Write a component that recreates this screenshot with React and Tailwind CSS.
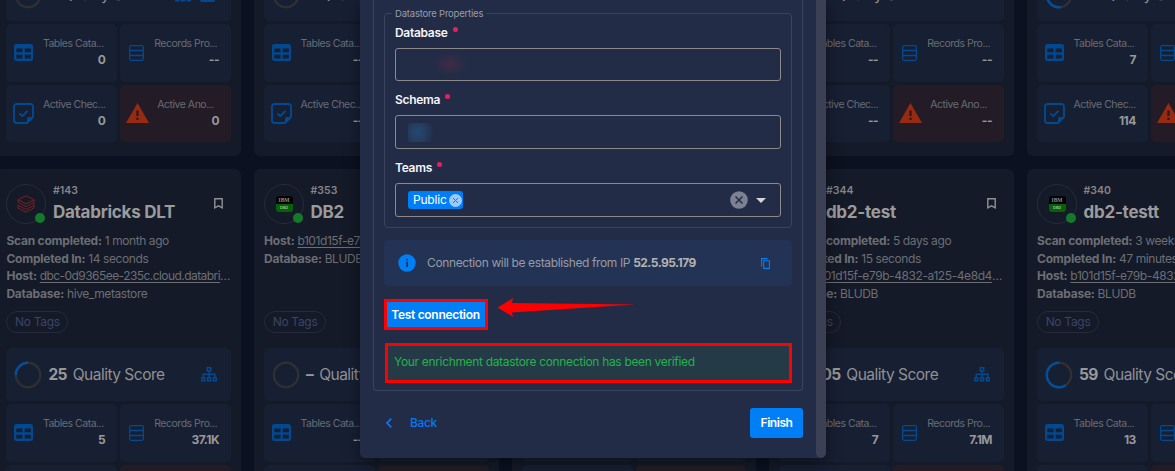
import React from "react";

const topRow = [
  { score: "–", pct: 0, icons: true, tables: "0", records: "--", checks: "0", anomalies: "0" },
  { score: "–", pct: 0, tables: "--", records: "--", checks: "--", anomalies: "--" },
  { score: "–", pct: 0, tables: "--", records: "--", checks: "--", anomalies: "--" },
  { score: "–", pct: 0, tables: "--", records: "--", checks: "--", anomalies: "--" },
  { score: "50", pct: 52, tables: "7", records: "--", checks: "114", anomalies: "--" },
];

const bottomRow = [
  {
    id: "#143", name: "Databricks DLT", logo: "databricks", op: "Scan",
    scan: "1 month ago", took: "14 seconds", host: "dbc-0d9365ee-235c.cloud.databricks.com", db: "hive_metastore",
    score: "25", pct: 25, tree: true, tables: "5", records: "37.1K",
  },
  {
    id: "#353", name: "DB2", logo: "db2",
    host: "b101d15f-e79b-4832-a125-4e8d4d.cloud", db: "BLUDB",
    score: "–", pct: 0, tables: "--", records: "--",
  },
  {
    id: "", name: "", logo: "db2",
    host: "", db: "",
    score: "–", pct: 0, tables: "--", records: "--",
  },
  {
    id: "#344", name: "db2-test", logo: "db2", op: "Catalog",
    scan: "5 days ago", took: "15 seconds", host: "b101d15f-e79b-4832-a125-4e8d4d.cloud", db: "BLUDB",
    score: "05", pct: 5, tree: true, tables: "7", records: "7.1M",
  },
  {
    id: "#340", name: "db2-testt", logo: "db2", op: "Scan",
    scan: "3 weeks ago", took: "47 minutes", host: "b101d15f-e79b-4832-a125-4e8d4d.cloud", db: "BLUDB",
    score: "59", pct: 59, tree: true, tables: "13", records: "7.1M",
  },
];

function Ring({ pct }) {
  const c = 2 * Math.PI * 12.2;
  return (
    <svg className="h-7 w-7 shrink-0" viewBox="0 0 28 28" fill="none" strokeWidth="2.4">
      <circle cx="14" cy="14" r="12.2" stroke="#303032" />
      {pct > 0 && (
        <circle
          cx="14" cy="14" r="12.2" stroke="#044f9a"
          strokeDasharray={`${(c * pct) / 100} ${c}`}
          transform="translate(28 0) scale(-1 1) rotate(-90 14 14)"
        />
      )}
    </svg>
  );
}

function TableIcon() {
  return (
    <svg className="h-[17px] w-[19px]" viewBox="0 0 19 17">
      <rect width="19" height="17" rx="2.5" fill="#03498f" />
      <path d="M2.300 4.500h6.200v3.700H2.300zM10.700 4.500h6.200v3.700h-6.200zM2.300 10.800h6.200v3.700H2.300zM10.700 10.800h6.200v3.700h-6.200z" fill="#171f33" />
    </svg>
  );
}

function RowsIcon() {
  return (
    <svg className="-ml-[2px] h-4 w-[15px]" viewBox="0 0 15 16" fill="none" stroke="#03498f" strokeWidth="1.3">
      <rect x=".65" y=".65" width="13.7" height="14.700" rx="1.500" />
      <path d="M.6 5.500h13.800M.6 10.500h13.800" />
    </svg>
  );
}

function CheckNoteIcon() {
  return (
    <svg className="h-[21px] w-[21px]" viewBox="0 0 21 21" fill="none" stroke="#03498f" strokeWidth="1.900">
      <path d="M14 20H3.500A2.500 2.500 0 0 1 1 17.500V3.500A2.500 2.500 0 0 1 3.500 1h14A2.500 2.500 0 0 1 20 3.500V14Z" strokeLinejoin="round" />
      <path d="M14 20v-4.500a1.500 1.500 0 0 1 1.500-1.500H20Z" fill="#03498f" stroke="none" />
      <path d="m6.300 10.300 2.900 2.900 5.300-5.300" />
    </svg>
  );
}

function WarningIcon() {
  return (
    <svg className="h-5 w-[23px]" viewBox="0 0 23 20">
      <path d="M11.500 0 23 20H0Z" fill="#982a11" />
      <path d="M10.400 7.500h2.200v5.500h-2.200zM10.400 14.700h2.200v2.200h-2.200z" fill="#231c26" />
    </svg>
  );
}

function TreeIcon() {
  return (
    <svg className="h-[15px] w-4" viewBox="0 0 16 15" fill="none" stroke="#03498f" strokeWidth="1.500">
      <path d="M6.300.8h3.400v3.300H6.300zM.8 10.800h2.900v3H.8zM6.500 10.800h3v3h-3zM12.300 10.800h2.900v3h-2.900zM8 4v7M2.200 11V7.300h11.600V11" />
    </svg>
  );
}

function Logo({ kind }) {
  if (kind === "databricks") {
    return (
      <svg className="h-[18px] w-[18px]" viewBox="0 0 18 18" fill="none" stroke="#7d211d" strokeWidth="1">
        <path d="M1 4.700 9 .8l8 3.900-8 4.200-8-4.200v2.700l8 4.200 8-4.200v2.900l-8 4.200-8-4.200v2.700l8 4.200 8-4.200v-2.700M17 4.700v2.700" />
      </svg>
    );
  }
  return (
    <div className="flex h-4 w-[17px] flex-col overflow-hidden rounded-[3px] text-center font-['Liberation_Serif',serif] text-[5.500px] font-bold leading-[9px] text-[#8b8b8b]">
      <span className="h-2 bg-black">IBM</span>
      <span className="h-2 bg-[#056306] font-['Liberation_Sans',sans-serif] text-[4px] leading-[7px] text-[#a5b5a5]">DB2</span>
    </div>
  );
}

function Stat({ icon, label, value, danger, wide }) {
  return (
    <div
      className={`flex h-[57.500px] items-center rounded-[5px] pr-3 ${danger ? "bg-[#231c26]" : "bg-[#171f33]"}`}
    >
      <div className="flex w-[35px] shrink-0 justify-center">{icon}</div>
      <div className={`min-w-0 flex-1 ${wide ? "pl-[1.500px]" : danger ? "pl-[2px]" : "-ml-px"}`}>
        <div className="whitespace-nowrap text-[10.500px] leading-4 tracking-[-0.480px] text-[#696c73]">{label}</div>
        <div className="-mt-px text-right text-[12px] font-bold leading-[18px] tracking-[-0.5px] text-[#989899]">{value}</div>
      </div>
    </div>
  );
}

function Stats({ d }) {
  return (
    <div className="flex flex-col gap-[3px]">
      <div className="flex h-[53px] items-center rounded-[5px] bg-[#171f33] pl-2 pr-[14px]">
        <Ring pct={d.pct} />
        <span className="ml-[6px] text-[15.500px] font-bold tracking-[-0.7px] text-[#989899]">{d.score}</span>
        <span className="ml-[6px] flex-1 whitespace-nowrap text-[15.500px] tracking-[-0.5px] text-[#909193]">Quality Score</span>
        {(d.tree || d.icons) && <TreeIcon />}
        {d.icons && (
          <svg className="ml-[9px] mr-[2px] h-[14px] w-[15px]" viewBox="0 0 15 14">
            <rect width="15" height="14" rx="2" fill="#03498f" />
          </svg>
        )}
      </div>
      <div className="grid grid-cols-2 gap-[3px]">
        <Stat icon={<TableIcon />} label="Tables Cata..." value={d.tables} wide />
        <Stat icon={<RowsIcon />} label="Records Pro..." value={d.records} />
        <Stat icon={<CheckNoteIcon />} label="Active Chec..." value={d.checks} wide />
        <Stat icon={<WarningIcon />} label="Active Ano..." value={d.anomalies} danger />
      </div>
    </div>
  );
}

function Meta({ label, children }) {
  return (
    <div className="truncate">
      <b className="font-bold tracking-[-0.220px]">{label}:</b> {children}
    </div>
  );
}

function Card({ d }) {
  return (
    <article className="h-[367px] min-w-0 rounded-[6px] bg-[#141a28] px-[10px] pt-[15px]">
      <header className="flex h-10">
        <div className="relative flex h-10 w-10 shrink-0 items-center justify-center rounded-full border border-[#252c3c]">
          <Logo kind={d.logo} />
          <i className="absolute right-0 bottom-0 h-[10px] w-[10px] rounded-full bg-[#147a2b]" />
        </div>
        <div className="ml-[6.500px] flex-1 whitespace-nowrap">
          <div className="h-[13px] text-[10.500px] font-semibold leading-[13px] tracking-[0.050px] text-[#85868a]">{d.id}</div>
          <div className="text-[17px] font-bold leading-[30px] tracking-[-0.250px] text-[#9b9b9c]">{d.name}</div>
        </div>
        <svg className="mr-2 mt-[14px] h-[11px] w-[9px]" viewBox="0 0 9 11" fill="none" stroke="#909195" strokeWidth="1.400">
          <path d="M.8.8h7.400v9L4.500 7.900.8 9.800Z" />
        </svg>
      </header>
      <div className="mt-2 h-[71px] text-[12px] leading-[17.700px] tracking-[-0.420px] text-[#6c6e74]">
        {d.scan && <Meta label={`${d.op} completed`}>{d.scan}</Meta>}
        {d.took && <Meta label="Completed In">{d.took}</Meta>}
        {d.host && (
          <Meta label="Host">
            <u className={d.logo === "databricks" ? "tracking-[-0.560px] underline-offset-2" : "underline-offset-2"}>{d.host}</u>
          </Meta>
        )}
        {d.db && <Meta label="Database">{d.db}</Meta>}
      </div>
      <div className="mb-[15px] mt-2 flex h-[22px] w-[62px] items-center justify-center whitespace-nowrap rounded-full border border-[#252b3c] text-[12px] tracking-[-0.3px] text-[#3b4564]">
        No Tags
      </div>
      <Stats d={d} />
    </article>
  );
}

function Label({ children }) {
  return (
    <div className="flex items-start text-[12px] font-semibold leading-4 tracking-[-0.3px] text-[#f4f5f8]">
      {children}
      <i className="ml-[5px] mt-[2px] h-[5px] w-[5px] rounded-full bg-[#ed1c60]" />
    </div>
  );
}

function Modal() {
  return (
    <section className="absolute left-[360px] top-0 flex h-[458px] w-[466px] overflow-hidden rounded-b-[5px] bg-[#232c47] shadow-[0_4px_16px_rgba(0,0,0,0.45)]">
      <div className="flex flex-1 flex-col pl-[13px] pr-[13px]">
        <div className="h-[391px] rounded-b-[4px] border-x border-b border-[#3b445f] px-[10px] pt-[13px]">
          <div className="relative h-[215px] rounded-[4px] border border-[#3b445f] px-[10px] pt-[11px]">
            <span className="absolute left-[7px] top-[-8px] whitespace-nowrap bg-[#232c47] px-[3px] text-[9.500px] leading-4 tracking-[-0.2px] text-[#9a9da7]">
              Datastore Properties
            </span>
            <Label>Database</Label>
            <div className="mt-[7px] h-[33px] rounded-[3px] border border-[#8b8989] pl-[38px] pt-[5px]">
              <div className="h-5 w-8 bg-[radial-gradient(16px_12px,#402b45,#232c47)]" />
            </div>
            <div className="mt-[11px]"><Label>Schema</Label></div>
            <div className="mt-[7px] h-[34px] rounded-[3px] border border-[#8b8989] pl-3 pt-[7px]">
              <div className="h-[19px] w-[26px] bg-[radial-gradient(16px_18px_at_38%_50%,#25486f_0%,#243f63_45%,#232c47_100%)]" />
            </div>
            <div className="mt-[11px]"><Label>Teams</Label></div>
            <div className="mt-[7px] flex h-[34px] items-center rounded-[3px] border border-[#8b8989] pl-3 pr-[14px]">
              <span className="flex h-[18px] w-[55px] items-center justify-between rounded-[3px] bg-[#007ef5] pl-[5px] pr-px text-[12px] tracking-[-0.2px] text-white">
                Public
                <svg className="h-[13px] w-[13px]" viewBox="0 0 13 13">
                  <circle cx="6.500" cy="6.500" r="6.500" fill="#9acbfb" />
                  <path d="m4 4 5 5M9 4 4 9" stroke="#1778dc" />
                </svg>
              </span>
              <svg className="ml-auto h-[18px] w-[18px]" viewBox="0 0 18 18">
                <circle cx="9" cy="9" r="8.800" fill="#7c8293" />
                <path d="m5.500 5.500 7 7m0-7-7 7" stroke="#232c47" strokeWidth="1.500" />
              </svg>
              <svg className="ml-2 h-[5px] w-[10px]" viewBox="0 0 10 5">
                <path d="M0 0h10L5 5Z" fill="#d5d5d8" />
              </svg>
            </div>
          </div>
          <div className="mt-3 flex h-[46px] items-center rounded-[4px] bg-[#233356] pl-[14px] pr-[22px] text-[12px] text-[#989ba3]">
            <svg className="h-[18px] w-[18px] shrink-0" viewBox="0 0 18 18">
              <circle cx="9" cy="9" r="8.700" fill="#007ef5" />
              <path d="M8.200 7.800h1.700v5.200H8.200zM8.200 4.800h1.700v1.700H8.200z" fill="#233356" />
            </svg>
            <span className="ml-[11px] whitespace-nowrap tracking-[-0.370px]">
              Connection will be established from IP <b className="tracking-[-0.520px] text-[#b4b2ae]">52.5.95.179</b>
            </span>
            <svg className="ml-auto h-[11px] w-[9px]" viewBox="0 0 9 11" fill="none" stroke="#007ef5" strokeWidth="1.100">
              <path d="M2.700 2.700h5.700v7.700H2.700zM.6 8.500V.6h6" />
            </svg>
          </div>
          <div className="mt-[13px] flex items-start">
            <button className="h-[31px] w-[104px] whitespace-nowrap border-[3px] border-[#fe0000] bg-[#007ef5] pr-px text-[12px] font-semibold tracking-[-0.3px] text-white">
              Test connection
            </button>
            <svg className="-mt-[2px] ml-[9px] h-[22px] w-[140px]" viewBox="0 0 140 22">
              <path d="M.5 10.500 16.500 1l-2 5L138 7.500 14.500 15.500l2 4.500Z" fill="#fe0000" />
            </svg>
          </div>
          <div className="ml-px mt-[13px] h-10 border-[3px] border-[#fe0000] bg-[#243b47] pl-[6px] text-[12px] leading-[32px] tracking-[-0.330px] text-[#23b24c]">
            Your enrichment datastore connection has been verified
          </div>
        </div>
        <div className="mt-[17px] flex h-[30px] items-center justify-between pl-[13px]">
          <button className="flex items-center gap-[18px] text-[12px] font-medium tracking-[-0.4px] text-[#0878ef]">
            <svg className="h-[10px] w-[6px]" viewBox="0 0 6 10" fill="none" stroke="#0878ef" strokeWidth="1.700">
              <path d="M5.300.7 1 5l4.300 4.300" />
            </svg>
            Back
          </button>
          <button className="h-[30px] w-[53px] rounded-[3px] bg-[#007ef5] text-[12px] font-semibold tracking-[-0.450px] text-white">Finish</button>
        </div>
      </div>
      <div className="w-[10px] rounded-b-[5px] bg-[#3b4054]" />
    </section>
  );
}

export default function App() {
  return (
    <main className="relative h-[471px] w-[1175px] overflow-hidden bg-[#0b1120] font-['Inter',sans-serif]">
      <div className="-ml-[3.600px] -mt-8 w-[1275.300px]">
        <div className="grid grid-cols-5 gap-[13px]">
          {topRow.map((d, i) => (
            <div key={i} className="h-[188px] rounded-b-[6px] bg-[#141a28] px-[10px]">
              <Stats d={d} />
            </div>
          ))}
        </div>
        <div className="mt-[13px] grid grid-cols-5 gap-[13px]">
          {bottomRow.map((d, i) => <Card key={i} d={d} />)}
        </div>
      </div>
      <Modal />
    </main>
  );
}
